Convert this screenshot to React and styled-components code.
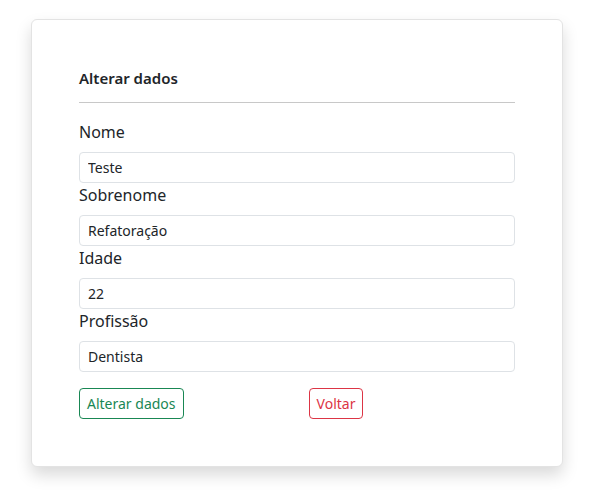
import React from 'react';
import styled, { createGlobalStyle } from 'styled-components';

const GlobalStyle = createGlobalStyle`
  body {
    margin: 0;
    background: #fff;
    font-family: "Segoe UI", "Noto Sans", "Open Sans", sans-serif;
    color: #212529;
  }
`;

const Page = styled.div`
  padding: 19px 28px 30px 31px;
`;

const Card = styled.div`
  width: 532px;
  box-sizing: border-box;
  padding: 47px 47px 47px;
  background: #fff;
  border: 1px solid #e3e3e3;
  border-radius: 6px;
  box-shadow: 0 8px 16px rgba(0, 0, 0, 0.15);
`;

const Title = styled.h5`
  margin: 0;
  font-size: 15px;
  font-weight: 600;
  line-height: 22px;
`;

const Divider = styled.hr`
  margin: 13px 0 17px;
  border: 0;
  border-top: 1px solid #c8c8c8;
`;

const Field = styled.div`
  display: flex;
  flex-direction: column;
`;

const Label = styled.label`
  font-size: 16px;
  line-height: 24px;
  margin-bottom: 8px;
`;

const Input = styled.input`
  height: 31px;
  box-sizing: border-box;
  padding: 4px 8px;
  font-family: inherit;
  font-size: 14px;
  color: #212529;
  border: 1px solid #dee2e6;
  border-radius: 4px;
`;

const Actions = styled.div`
  display: flex;
  gap: 125px;
  margin-top: 16px;
`;

const Button = styled.button`
  height: 31px;
  padding: 4px 7px;
  font-family: inherit;
  font-size: 14px;
  background: #fff;
  color: ${({ tone }) => tone};
  border: 1px solid ${({ tone }) => tone};
  border-radius: 4px;
`;

const fields = [
  { label: 'Nome', value: 'Teste' },
  { label: 'Sobrenome', value: 'Refatoração' },
  { label: 'Idade', value: '22' },
  { label: 'Profissão', value: 'Dentista' },
];

const App = () => (
  <>
    <GlobalStyle />
    <Page>
      <Card>
        <Title>Alterar dados</Title>
        <Divider />
        {fields.map((f) => (
          <Field key={f.label}>
            <Label>{f.label}</Label>
            <Input defaultValue={f.value} />
          </Field>
        ))}
        <Actions>
          <Button tone="#198754">Alterar dados</Button>
          <Button tone="#dc3545">Voltar</Button>
        </Actions>
      </Card>
    </Page>
  </>
);

export default App;
